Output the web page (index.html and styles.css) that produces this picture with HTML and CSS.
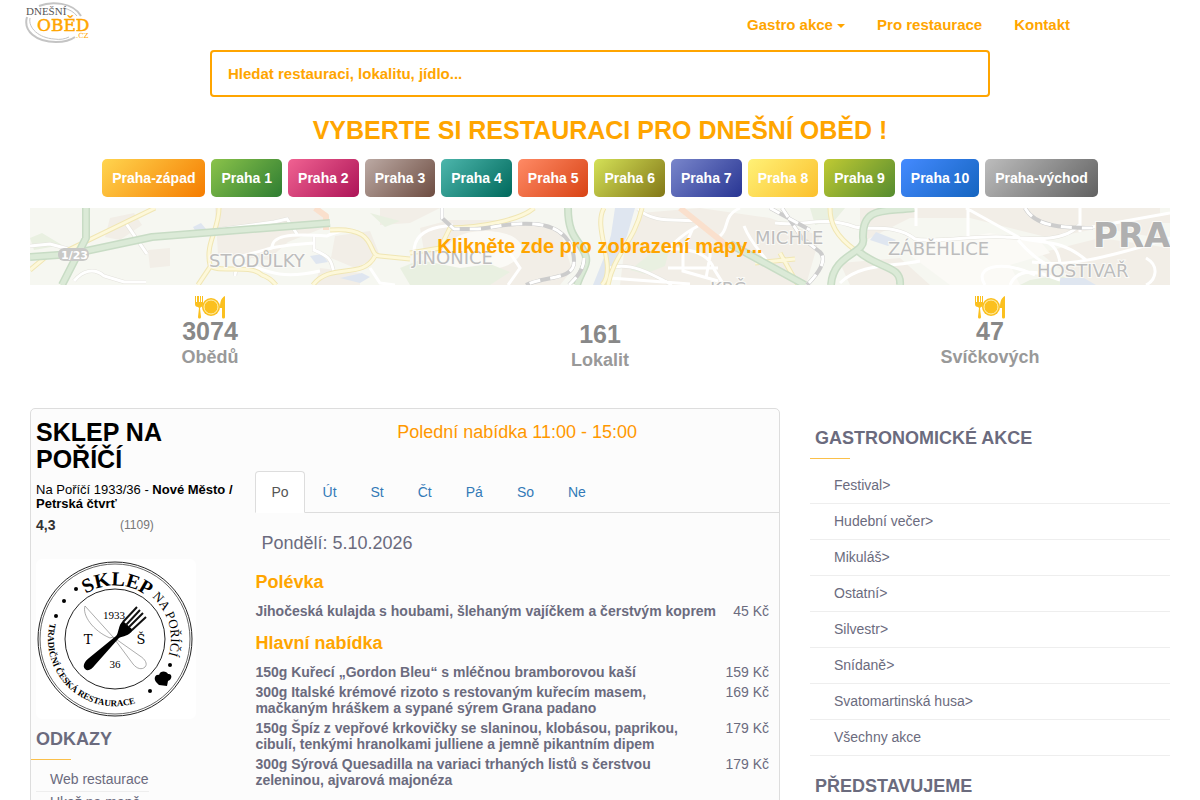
FILE: index.html
```html
<!DOCTYPE html>
<html lang="cs">
<head>
<meta charset="utf-8">
<meta name="viewport" content="width=device-width, initial-scale=1">
<title>Dnešní oběd</title>
<link rel="stylesheet" href="styles.css">
</head>
<body>
<header class="topbar">
  <a class="brand" href="#" aria-label="Dnešní oběd">
    <svg width="70" height="44" viewBox="0 0 70 44">
      <g fill="none" stroke="#c4c4c4">
        <path d="M2 17C-2 31 11 42 31 42c8 0 15-2 19-5" stroke-width="2"/>
        <path d="M5 18C3 28 14 38 29 39c6 1 11 0 15-2" stroke-width="1"/>
        <path d="M14 6C26 1 48 2 56 16" stroke-width="2"/>
        <path d="M38 8c6 1 11 4 14 8" stroke-width="1"/>
      </g>
      <text class="brand-small" x="1" y="15">DNEŠNÍ</text>
      <text class="brand-big" x="12" y="31">OBĚD</text>
      <text class="brand-tld" x="51" y="38">.CZ</text>
    </svg>
  </a>
  <nav class="menu">
    <a href="#">Gastro akce <span class="caret"></span></a>
    <a href="#">Pro restaurace</a>
    <a href="#">Kontakt</a>
  </nav>
</header>

<main>
  <form class="search">
    <input type="text" aria-label="Hledat restauraci" placeholder="Hledat restauraci, lokalitu, jídlo...">
  </form>

  <h1 class="headline">VYBERTE SI RESTAURACI PRO DNEŠNÍ OBĚD !</h1>

  <div class="districts">
    <a class="district west" href="#">Praha-západ</a>
    <a class="district p1" href="#">Praha 1</a>
    <a class="district p2" href="#">Praha 2</a>
    <a class="district p3" href="#">Praha 3</a>
    <a class="district p4" href="#">Praha 4</a>
    <a class="district p5" href="#">Praha 5</a>
    <a class="district p6" href="#">Praha 6</a>
    <a class="district p7" href="#">Praha 7</a>
    <a class="district p8" href="#">Praha 8</a>
    <a class="district p9" href="#">Praha 9</a>
    <a class="district p10" href="#">Praha 10</a>
    <a class="district east" href="#">Praha-východ</a>
  </div>

  <button class="map" type="button">
    <svg class="map-art" viewBox="0 0 1140 77" preserveAspectRatio="xMidYMid slice" aria-hidden="true">
      <rect width="1140" height="77" fill="#f6f7f1"/>
      <g fill="#f2eee7">
        <path d="M185 0h105l8 18-40 16-20 18-50-6zM305 28l35-5 10 25-25 12-24-10zM80 10l24-5 8 12-22 15-15-3zM118 42l22-2v18l-20 2zM390 20l30-8 50 0 60 10 12 40-12 15H400zM610 5l60-5 70 10 50 18-14 49H590l5-40zM830 0h300v30l-60-10-50 10-80-20-60 0-50 25zM600 40l60-30 60 20 20 47H600zM1010 45l60-15 70 10v37h-90zM810 55l60-5 30 27h-80zM350 0h60l-30 15-30 2z"/>
        <path d="M290 60l40 5v12h-45zM1090 5h50v10h-60zM210 40l20-4-10 16z"/>
      </g>
      <g fill="#fbfaf6">
        <path d="M420 35c10-15 50-15 65-5s5 30-30 32-60 5-70-2zM900 35l60-10 50 8 10 12-40 12 10 20h-70l-40-30z"/>
      </g>
      <g fill="#e9f0e1">
        <path d="M370 60l20-8 40 8 30-4 20 8-20 13h-80zM0 30l12-5 20 12-28 5zM600 62l20-16 20-8-5 20-20 8zM780 0h35l-10 12-20 5zM1000 72l30-5 20 10h-60zM340 5l30 8-15 6z"/>
      </g>
      <g fill="#dfe6f0">
        <path d="M585 0h20l-8 28-10 20-10 29h-14l12-30 6-20zM846 24l20 8-8 6-18-6zM310 70l20 5 10-6-8-4zM163 19l8-4 5 6-10 3zM280 48l12-2 6 8-12 2zM1030 70l24 0 12 7h-36z"/>
      </g>
      <g fill="none" stroke="#e4e3dd" stroke-width="4">
        <path d="M184 22l60-8 13-3 10 15M95 14l22 32M0 38l20-2 30 8M44 73c8-10 20-14 30-5l20 6 22 0M205 68c0-9 8-12 20-9M284 26l0 16c14 6 18 8 20 25M608 1c15 14 35 10 60 12M580 60c20-6 40 5 62 17M745 15c30 4 46-8 80 4 15 4 40-4 60 12 20 4 60-4 90-2s60 5 74-12"/>
      </g>
      <g fill="none" stroke="#ffffff" stroke-width="3">
        <path d="M184 22l60-8 13-3 10 15M204 50c20-5 30-8 38-10 0-12 15-15 55-12 5-3 10-4 20-6M240 40l20-3 24-2M95 14l22 32M0 38l20-2 30 8M44 73c8-10 20-14 30-5l20 6 22 0M205 68c0-9 8-12 20-9M284 26l0 16c14 6 18 8 20 25M220 57c20 8 35 14 70 6M340 60l10 15 15 2M384 44c0-14 10-22 25-25l14-2"/>
        <path d="M608 1c15 14 35 10 60 12M668 18c-20 10-25 20-34 25 20-6 45 2 50 18l10 16M663 20l-10 23 0 20 35 10M680 34v14l-4 22M638 60h50M580 60c20-6 40 5 62 17M690 28c10-8 2-20 20-28M714 18c8 20 20 28 26 40M745 15c30 4 46-8 80 4 15 4 40-4 60 12 20 4 60-4 90-2s60 5 74-12M886 18V0M936 0l54 30c22 6 40 0 66 22M988 32c10 12 22 22 36 28M938 0v28M1050 0v24M1140 5l-78 14M810 75c20-20 52-16 80-22M955 77c-12-18 15-26 50-10M980 77c5-12 15-14 30-12l20 7M1002 54c30 5 70-2 138-24M1116 50c14 8 10 22 0 27M580 70l80 6M480 45l10 15-12 17M1010 33c15 0 20 15 20 25"/>
      </g>
      <g fill="none" stroke-linejoin="round">
        <path d="M189 0c0 22-14 35-9 57 4 9 40-2 52 10 6 2 10 5 14 10M30 46L125 0M0 62l18-15M300 22c50-4 36 26 50 26l30 3M345 48c-12 24-45 6-62 29M380 45l30-5 10-20c30 0 70-8 84-20M574 0c-12 20 14 60-2 77M612 0c-8 35-28 45-34 77M168 77l12-18M800 0c0 16 6 28 25 42M750 45l18 32M725 55l40-4" stroke="#f0e6b4" stroke-width="5"/>
        <path d="M189 0c0 22-14 35-9 57 4 9 40-2 52 10 6 2 10 5 14 10M30 46L125 0M0 62l18-15M300 22c50-4 36 26 50 26l30 3M345 48c-12 24-45 6-62 29M380 45l30-5 10-20c30 0 70-8 84-20M574 0c-12 20 14 60-2 77M612 0c-8 35-28 45-34 77M168 77l12-18M800 0c0 16 6 28 25 42M750 45l18 32M725 55l40-4" stroke="#fdf8da" stroke-width="3"/>
        <path d="M285 0l11 8v14M650 0l50 40" stroke="#fae0cd" stroke-width="6"/>
        <path d="M56 0l0 30-24 47M0 49l42-3 80-17L300 15M538 0c0 25 8 30 14 40 10 15 0 20-5 37M700 36l75 41M884 0c-30 4-52-2-51 30 4 16-30 15-32 47M828 43c20 18 44 14 42 34" stroke="#c8dcc5" stroke-width="8"/>
        <path d="M56 0l0 30-24 47M0 49l42-3 80-17L300 15M538 0c0 25 8 30 14 40 10 15 0 20-5 37M700 36l75 41M884 0c-30 4-52-2-51 30 4 16-30 15-32 47M828 43c20 18 44 14 42 34" stroke="#dbead7" stroke-width="5"/>
        <path d="M412 0v10l12 11h20c20 0 30-7 60-5s40 20 40 38-30 14-48 23M554 50c0 12-8 20-15 27M740 0l40 22M752 0l20 30 18 14c8 8-2 22-13 33M995 0c10 18 35 20 68 20" stroke="#cccccc" stroke-width="4"/>
        <path d="M412 0v10l12 11h20c20 0 30-7 60-5s40 20 40 38-30 14-48 23M554 50c0 12-8 20-15 27M740 0l40 22M752 0l20 30 18 14c8 8-2 22-13 33M995 0c10 18 35 20 68 20" stroke="#ffffff" stroke-width="3" stroke-dasharray="11 10"/>
      </g>
      <rect x="28" y="40" width="31" height="13" rx="6" fill="#c9c9c7"/>
      <g class="map-places">
        <text class="map-road" x="31" y="51">1/23</text>
        <text x="179" y="59">STODŮLKY</text>
        <text x="382" y="56">JINONICE</text>
        <text x="725" y="36">MICHLE</text>
        <text x="858" y="47">ZÁBĚHLICE</text>
        <text x="1007" y="69">HOSTIVAŘ</text>
        <text x="680" y="87">KRČ</text>
        <text class="map-city" x="1063" y="39">PRA</text>
      </g>
    </svg>
    <span class="map-label">Klikněte zde pro zobrazení mapy...</span>
  </button>

  <section class="stats">
    <div class="stat">
      <svg class="stat-icon" width="32" height="24" viewBox="0 0 32 24">
        <g fill="#fbc01f"><path d="M1 1h1v6h1V1h2v6h1V1h1v6h1V1h1v8c0 2-1 3-2 3l-1 1 1 9c0 2-3 2-3 0l1-9-1-1c-2 0-3-1-3-3zM31 1c-4 2-5 6-5 12h2v9c0 2 3 2 3 0V1z"/><circle cx="17" cy="12" r="9"/></g>
        <circle cx="17" cy="12" r="7" fill="none" stroke="#fff1b5"/>
      </svg>
      <strong>3074</strong><span>Obědů</span>
    </div>
    <div class="stat plain"><strong>161</strong><span>Lokalit</span></div>
    <div class="stat">
      <svg class="stat-icon" width="32" height="24" viewBox="0 0 32 24">
        <g fill="#fbc01f"><path d="M1 1h1v6h1V1h2v6h1V1h1v6h1V1h1v8c0 2-1 3-2 3l-1 1 1 9c0 2-3 2-3 0l1-9-1-1c-2 0-3-1-3-3zM31 1c-4 2-5 6-5 12h2v9c0 2 3 2 3 0V1z"/><circle cx="17" cy="12" r="9"/></g>
        <circle cx="17" cy="12" r="7" fill="none" stroke="#fff1b5"/>
      </svg>
      <strong>47</strong><span>Svíčkových</span>
    </div>
  </section>

  <div class="content">
    <article class="card">
      <div class="restaurant">
        <h2 class="name">SKLEP NA POŘÍČÍ</h2>
        <p class="address">Na Poříčí 1933/36 - <b>Nové Město / Petrská čtvrť</b></p>
        <div class="rating"><b>4,3</b><span>(1109)</span></div>
        <svg class="emblem" width="160" height="160" viewBox="0 0 160 160">
          <defs>
            <path id="arc-a" d="M-29-45A54 54 0 0 1 54 0"/>
            <path id="arc-b" d="M37-42A56 56 0 0 1 0 56"/>
            <path id="arc-c" d="M-65-16A67 67 0 0 0 47 48"/>
          </defs>
          <rect width="160" height="160" rx="6" fill="#fff"/>
          <g transform="translate(79 80)">
            <g fill="none" stroke="#222">
              <circle r="77" stroke-width="1"/><circle r="75" stroke-width=".7"/><circle r="50" stroke-width="1"/>
            </g>
            <text class="seal-main"><textPath href="#arc-a">SKLEP</textPath></text>
            <text class="seal-side"><textPath href="#arc-b">NA POŘÍČÍ</textPath></text>
            <text class="seal-base"><textPath href="#arc-c">TRADIČNÍ ČESKÁ RESTAURACE</textPath></text>
            <g class="seal-mid"><text x="-1" y="-20">1933</text><text x="0" y="29">36</text></g>
            <g class="seal-letter"><text x="-27" y="5">T</text><text x="26" y="5">Š</text></g>
            <circle cx="-39" cy="-50" r="2"/><circle cx="-51" cy="-38" r="2"/><circle cx="-59" cy="-23" r="2"/>
            <circle cx="55" cy="26" r="2"/><circle cx="35" cy="52" r="2"/>
            <path d="M41 43c-3-4 0-8 3-7 1-5 8-4 9-1 4-1 5 5 0 7l-1 5-8-1z"/>
            <path d="M-30-33c-3 9 8 25 25 32l3-1 20 27c4 5 9 6 12 3s0-8-5-11L-2-2z" fill="#fff" stroke="#888" stroke-width=".7"/>
            <path d="M-30 30c-3-3 0-8 4-11L1-3C4-6 3-14 8-18L18-9C14-3 8-3 4-1L-20 26c-3 4-7 7-10 4z"/>
            <path d="M8-17L22-32M11-14L25-29M14-12L28-26M17-9L31-22" fill="none" stroke="#111" stroke-width="2"/>
          </g>
        </svg>
        <h3 class="side-title">ODKAZY</h3>
        <ul class="links">
          <li><a href="#">Web restaurace</a></li>
          <li><a href="#">Ukaž na mapě</a></li>
        </ul>
      </div>
      <div class="menu-panel">
        <p class="serving">Polední nabídka 11:00 - 15:00</p>
        <div class="tabs" role="tablist">
          <button class="tab active" type="button" role="tab" aria-selected="true">Po</button>
          <button class="tab" type="button" role="tab">Út</button>
          <button class="tab" type="button" role="tab">St</button>
          <button class="tab" type="button" role="tab">Čt</button>
          <button class="tab" type="button" role="tab">Pá</button>
          <button class="tab" type="button" role="tab">So</button>
          <button class="tab" type="button" role="tab">Ne</button>
        </div>
        <p class="day">Pondělí: 5.10.2026</p>
        <h3 class="course">Polévka</h3>
        <ul class="dishes">
          <li><b>Jihočeská kulajda s houbami, šlehaným vajíčkem a čerstvým koprem</b><span>45 Kč</span></li>
        </ul>
        <h3 class="course">Hlavní nabídka</h3>
        <ul class="dishes">
          <li><b>150g Kuřecí „Gordon Bleu“ s mléčnou bramborovou kaší</b><span>159 Kč</span></li>
          <li><b>300g Italské krémové rizoto s restovaným kuřecím masem, mačkaným hráškem a sypané sýrem Grana padano</b><span>169 Kč</span></li>
          <li><b>150g Špíz z vepřové krkovičky se slaninou, klobásou, paprikou, cibulí, tenkými hranolkami julliene a jemně pikantním dipem</b><span>179 Kč</span></li>
          <li><b>300g Sýrová Quesadilla na variaci trhaných listů s čerstvou zeleninou, ajvarová majonéza</b><span>179 Kč</span></li>
        </ul>
      </div>
    </article>

    <aside class="sidebar">
      <h3 class="side-title">GASTRONOMICKÉ AKCE</h3>
      <ul class="events">
        <li><a href="#">Festival&gt;</a></li>
        <li><a href="#">Hudební večer&gt;</a></li>
        <li><a href="#">Mikuláš&gt;</a></li>
        <li><a href="#">Ostatní&gt;</a></li>
        <li><a href="#">Silvestr&gt;</a></li>
        <li><a href="#">Snídaně&gt;</a></li>
        <li><a href="#">Svatomartinská husa&gt;</a></li>
        <li><a href="#">Všechny akce</a></li>
      </ul>
      <h3 class="side-title">PŘEDSTAVUJEME</h3>
    </aside>
  </div>
</main>
</body>
</html>
```
FILE: styles.css
```css
* { box-sizing: border-box; }
html { overflow: hidden; }
body {
  margin: 0;
  height: 100vh;
  overflow: hidden;
  background: #fff;
  color: #6b6b7e;
  font: 14px/20px "Liberation Sans", Arial, sans-serif;
}
h1, h2, h3, p, ul { margin: 0; padding: 0; }
ul { list-style: none; }
a { color: inherit; text-decoration: none; }
button { font: inherit; border: 0; background: none; padding: 0; cursor: pointer; }

.topbar { display: flex; justify-content: space-between; height: 50px; padding: 0 130px 0 25px; }
.brand-small { font: 11px "Liberation Serif", serif; fill: #555; }
.brand-big { font: 17px "DejaVu Serif", serif; fill: #ffa500; stroke: #ffa500; stroke-width: .5; }
.brand-tld { font: 7px "DejaVu Serif", serif; fill: #ffa500; }
.menu { display: flex; align-items: center; gap: 32px; color: #ffa500; font-weight: bold; font-size: 15px; }
.caret { display: inline-block; vertical-align: middle; border: 4px solid transparent; border-top-color: #ffa500; border-bottom: 0; }

.search { width: 65%; margin: 0 auto; }
.search input {
  display: block;
  width: 100%;
  height: 47px;
  padding: 0 16px;
  border: 2px solid #ffa500;
  border-radius: 4px;
  background: #fff;
  color: #ffa500;
  font: bold 15px "Liberation Sans", Arial, sans-serif;
}
.search input::placeholder { color: #ffa500; opacity: 1; }

.headline { margin: 18px 0 14px; text-align: center; color: #ffa500; font-size: 25px; line-height: 30px; }

.districts { display: flex; flex-wrap: wrap; justify-content: center; gap: 6px; padding: 0 30px; }
.district { padding: 9px 10px; border-radius: 5px; color: #fff; font-weight: bold; }
.west { background: linear-gradient(135deg, #ffd54f, #f57c00); }
.p1 { background: linear-gradient(135deg, #8bc34a, #2e7d32); }
.p2 { background: linear-gradient(135deg, #f06292, #ad1457); }
.p3 { background: linear-gradient(135deg, #bcaaa4, #6d4c41); }
.p4 { background: linear-gradient(135deg, #4db6ac, #00695c); }
.p5 { background: linear-gradient(135deg, #ff8a65, #d84315); }
.p6 { background: linear-gradient(135deg, #d4e157, #827717); }
.p7 { background: linear-gradient(135deg, #7986cb, #283593); }
.p8 { background: linear-gradient(135deg, #fff176, #fbc02d); }
.p9 { background: linear-gradient(135deg, #c0ca33, #558b2f); }
.p10 { background: linear-gradient(135deg, #448aff, #1565c0); }
.east { background: linear-gradient(135deg, #bdbdbd, #616161); }

.map { display: grid; width: calc(100% - 60px); margin: 11px 30px 0; }
.map-art { grid-area: 1 / 1; width: 100%; height: 77px; }
.map-label { grid-area: 1 / 1; z-index: 1; align-self: center; padding-bottom: 2px; color: #ffa500; font-size: 20px; font-weight: bold; }
.map-places { font: 18px "DejaVu Sans", sans-serif; fill: #bdbdbd; stroke: #fafaf7; stroke-width: 2; paint-order: stroke; }
.map-road { font: bold 11px "DejaVu Sans", sans-serif; fill: #fff; stroke: none; }
.map-city { font: bold 34px "DejaVu Sans", sans-serif; fill: #b0b0b0; }

.stats { display: grid; grid-template-columns: repeat(3, 1fr); padding: 10px 15px 0; text-align: center; color: #999; }
.stat { display: flex; flex-direction: column; align-items: center; }
.stat.plain { padding-top: 27px; }
.stat strong { color: #888; font-size: 25px; line-height: 25px; }
.stat span { font-size: 18px; font-weight: bold; line-height: 26px; }

.content { display: grid; grid-template-columns: 25fr 12fr; gap: 30px; padding: 35px 30px 0; }
.card { display: grid; grid-template-columns: 3fr 7fr; border: 1px solid #ddd; border-radius: 5px; background: #fcfcfc; padding-bottom: 30px; }
.restaurant { padding: 10px 5px 0; }
.name { color: #000; font-size: 25px; line-height: 27px; }
.address { margin-top: 10px; color: #000; font-size: 13px; line-height: 14px; }
.rating { display: grid; grid-template-columns: 84px 1fr; margin-top: 4px; color: #333; }
.rating span { color: #777; font-size: 12px; }
.emblem { display: block; margin-top: 24px; }
.seal-main { font: bold 20px "Liberation Serif", serif; }
.seal-side { font: 13px "Liberation Serif", serif; }
.seal-base { font: bold 9px "Liberation Serif", serif; }
.seal-mid { font: 11px "Liberation Serif", serif; text-anchor: middle; }
.seal-letter { font: 13px "DejaVu Serif", serif; text-anchor: middle; }

.side-title { padding-left: 5px; font-size: 18px; line-height: 20px; }
.side-title::after { content: ""; display: block; width: 40px; height: 1px; margin: 10px 0 0 -5px; background: #fbc04a; }
.restaurant .side-title { margin: 10px -5px 0; }
.links { display: table; margin-top: 9px; }
.links li { padding: 0 0 2px 14px; border-bottom: 1px solid #eee; }

.serving { padding-top: 13px; text-align: center; color: #ff9800; font-size: 18px; }
.tabs { display: flex; gap: 2px; margin-top: 29px; border-bottom: 1px solid #ddd; }
.tab { height: 42px; margin-bottom: -1px; padding: 0 15px; border: 1px solid transparent; border-radius: 4px 4px 0 0; color: #337ab7; }
.tab.active { border-color: #ddd #ddd #fff; background: #fff; color: #555; }
.day { margin: 20px 0 0 6px; font-size: 18px; }
.course { margin: 19px 0 9px; color: #ffa500; font-size: 18px; line-height: 20px; }
.dishes li { display: grid; grid-template-columns: 1fr auto; gap: 12px; padding: 2px 10px 2px 0; line-height: 16px; }
.dishes + .course { margin-top: 12px; }

.sidebar { padding-top: 20px; }
.events { margin: 9px 0 20px; }
.events li { padding: 7px 24px 8px; border-bottom: 1px solid #eee; }
```
